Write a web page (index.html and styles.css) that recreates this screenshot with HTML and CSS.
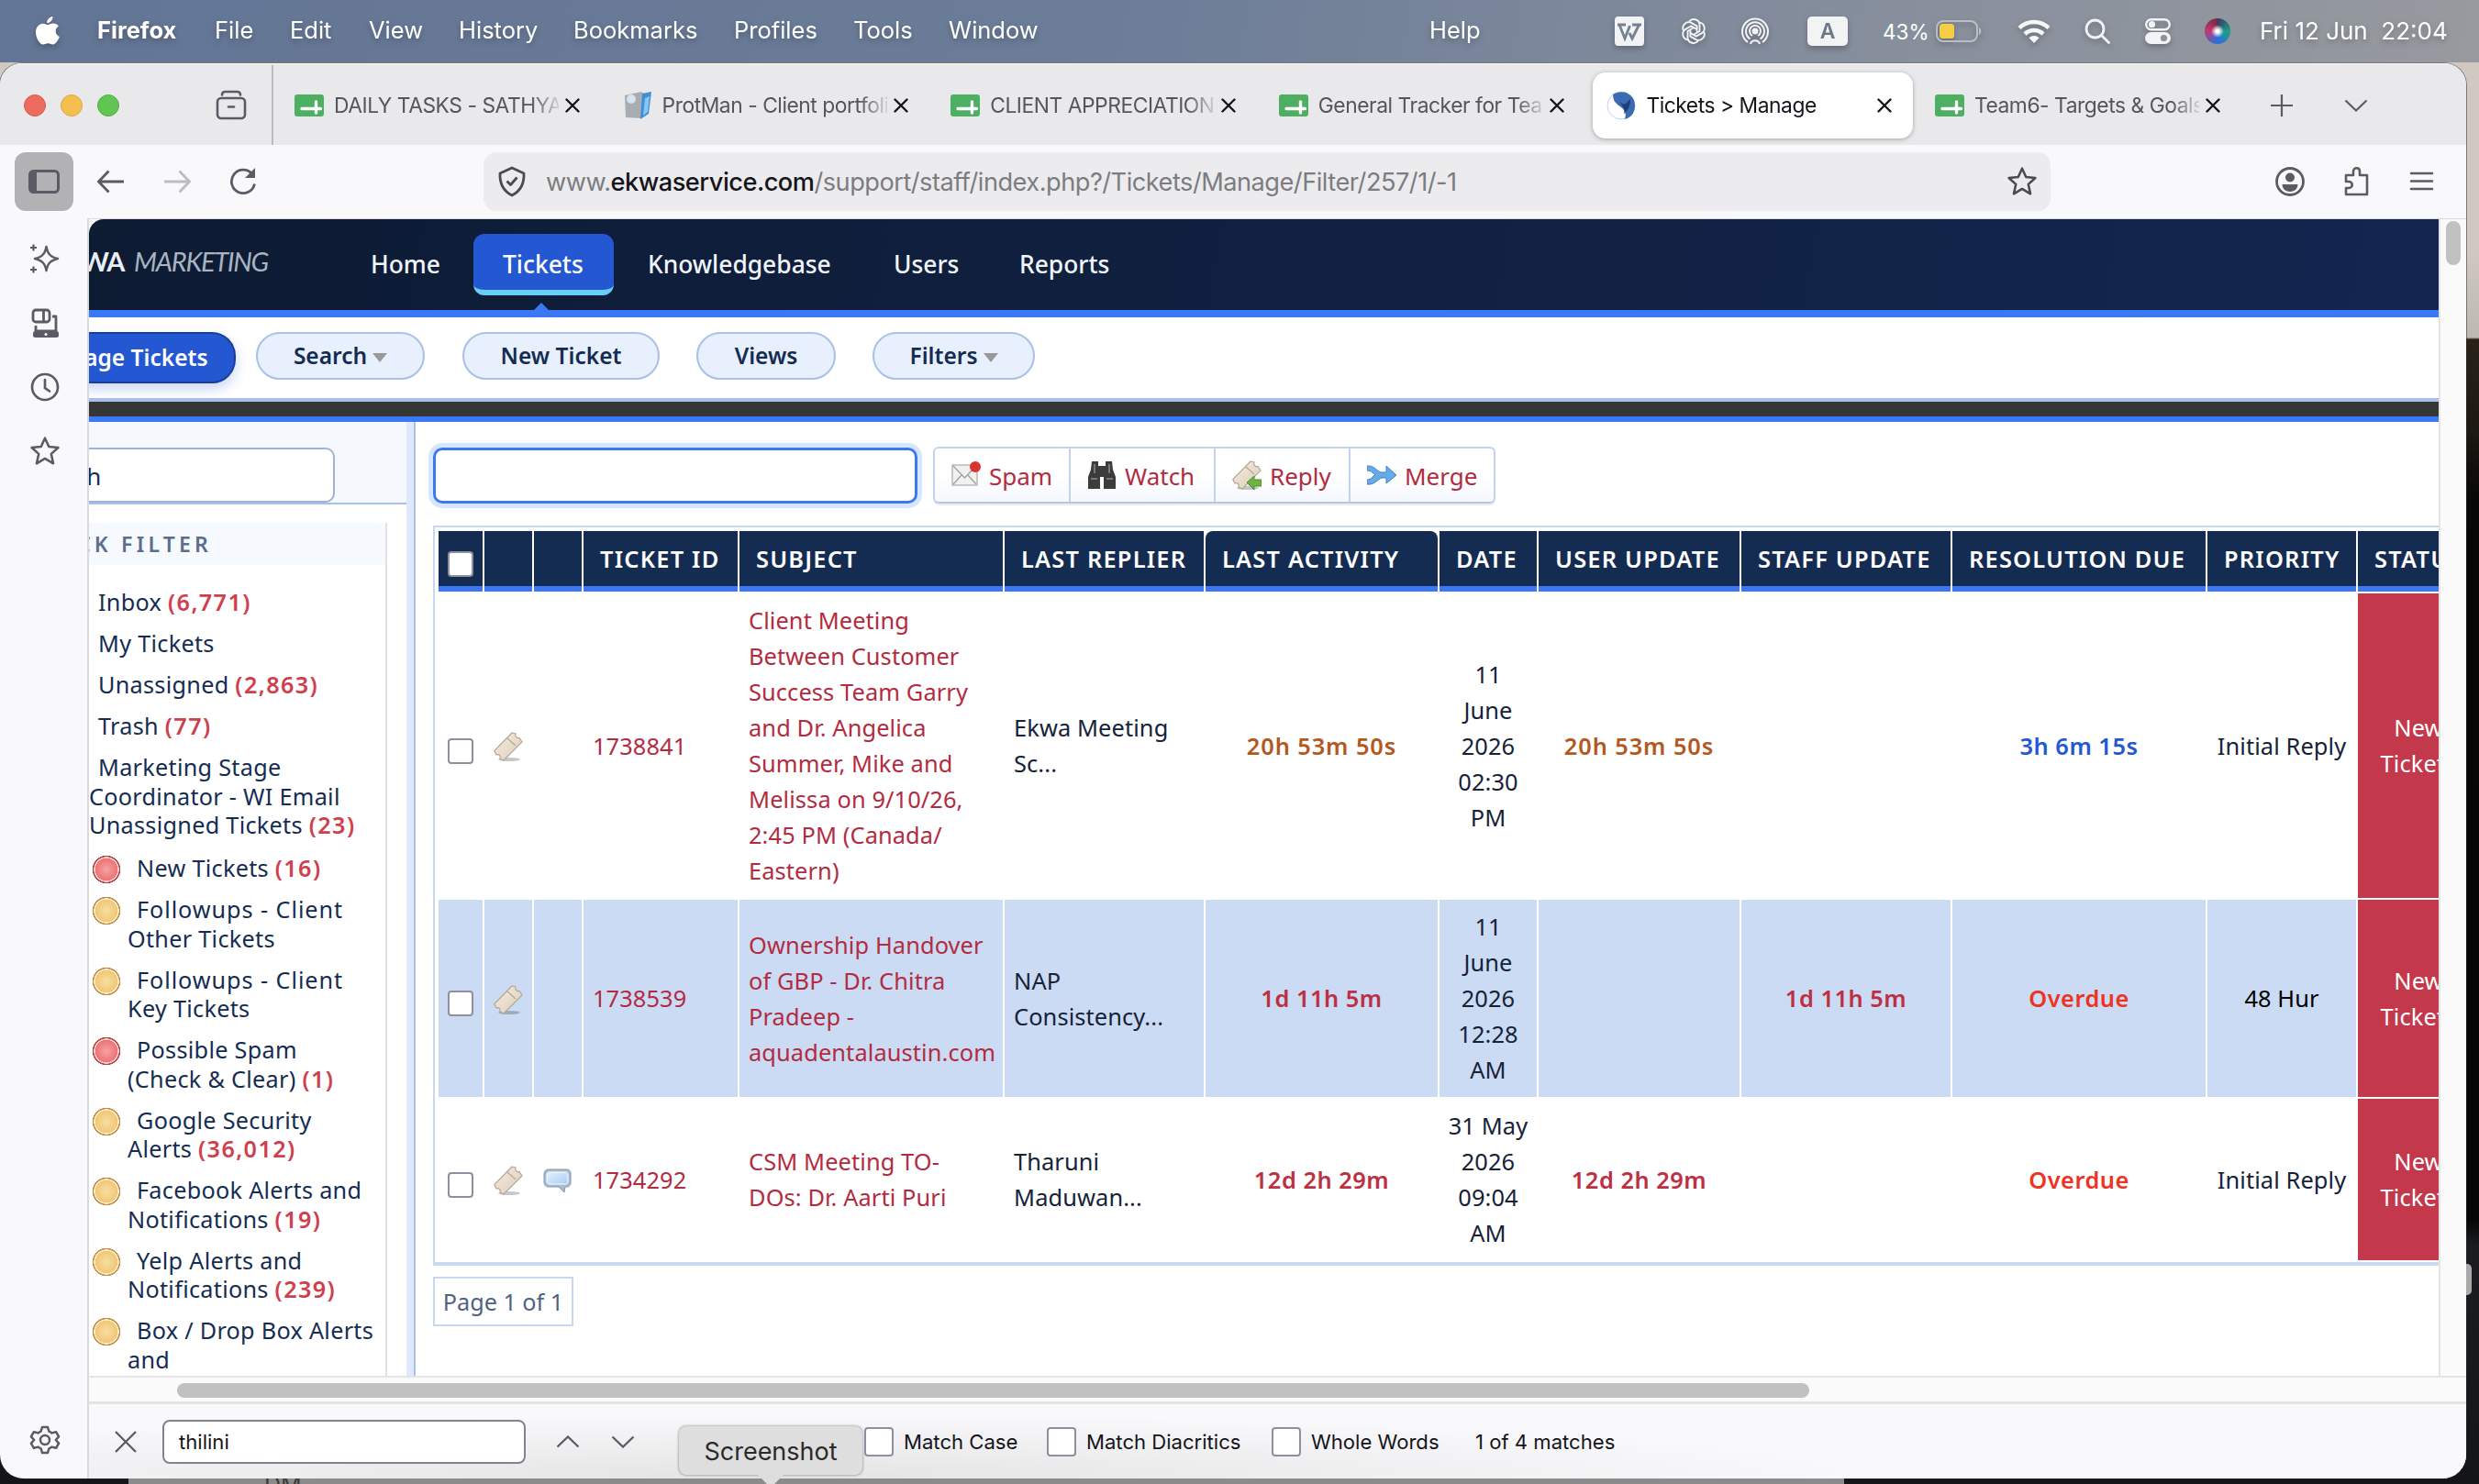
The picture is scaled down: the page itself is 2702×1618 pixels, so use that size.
FILE: index.html
```html
<!DOCTYPE html>
<html lang="en">
<head>
  <meta charset="UTF-8">
  <title>Tickets &gt; Manage</title>
  <link rel="stylesheet" href="styles.css">
</head>
<body>
  <!-- shared icons -->
  <svg class="defs" width="0" height="0">
    <defs>
      <linearGradient id="ticketFill" x1="0" y1="0" x2="1" y2="1">
        <stop offset="0" stop-color="#f6ece0"/><stop offset="1" stop-color="#dccdb9"/>
      </linearGradient>
      <linearGradient id="glass" x1="0" y1="0" x2="1" y2="1">
        <stop offset="0" stop-color="#e4f0fd"/><stop offset="1" stop-color="#a8cdf8"/>
      </linearGradient>
    </defs>
    <symbol id="sheet" viewBox="0 0 32 24">
      <rect width="32" height="24" rx="3" fill="#4caf61"/>
      <path d="M8 15.500h20.500M23.500 8v12" stroke="#fff" stroke-width="3.400" stroke-linecap="round"/>
    </symbol>
    <symbol id="close" viewBox="0 0 16 16">
      <path d="M1.500 1.500l13 13M14.500 1.500l-13 13" stroke="currentColor" stroke-width="2.400" stroke-linecap="round"/>
    </symbol>
    <symbol id="star" viewBox="0 0 32 32">
      <path d="M16 2.500l4 8.800 9.600 1-7.200 6.400 2.100 9.800-8.500-5-8.500 5 2.100-9.800-7.200-6.400 9.600-1z" fill="none" stroke="currentColor" stroke-width="2.400" stroke-linejoin="round"/>
    </symbol>
    <symbol id="ticket" viewBox="0 0 32 32">
      <ellipse cx="17" cy="30" rx="12" ry="2" fill="#000" opacity=".22"/>
      <path d="M20 1l4 1c-1 3 1 5 4 4.500l3 4.500L11 31l-4-2c1-3-1-5-4-4L.8 20.500z" fill="url(#ticketFill)" stroke="#b3a797" stroke-width="1.200"/>
      <path d="M15 7l9 8" stroke="#b3a797" stroke-width="1.200"/>
    </symbol>
  </svg>

  <header class="menubar">
    <svg class="apple" width="28" height="32" viewBox="0 0 28 32"><path fill="#fff" d="M19.500 0c.3 3.700-2.900 7.200-6.200 7.100C12.900 3.600 16.200.3 19.500 0zM14 9c1.500 0 3.300-1.600 6.200-1.500 2.300.1 4.400 1.200 5.700 3.100-4.800 3-4 9.400.9 11.500-1.300 3.700-4 8.300-6.900 8.400-2.100.1-2.900-1.300-5.500-1.300s-3.500 1.300-5.500 1.300C5 30.500 1 22.700 1 17.200c0-6 3.900-9.500 7.700-9.500C11.200 7.700 12.700 9 14 9z"/></svg>
    <nav class="menus">
      <b>Firefox</b><span>File</span><span>Edit</span><span>View</span><span>History</span><span>Bookmarks</span><span>Profiles</span><span>Tools</span><span>Window</span><span>Help</span>
    </nav>
    <div class="status">
      <svg width="32" height="32" viewBox="0 0 32 32"><rect width="32" height="32" rx="4" fill="#f2f3f5"/><path d="M3 9h9M5.500 10l5.500 14 5.500-14M16 18l3 6 7.500-15M19 9h10" fill="none" stroke="#75818f" stroke-width="2.800"/></svg>
      <svg width="32" height="32" viewBox="0 0 32 32" fill="none" stroke="#f2f3f5" stroke-width="1.900"><g id="knot"><path d="M11 5.500a6.500 6.500 0 0 1 11.500 3v7.500l-6 3.500"/><path d="M22.300 6.400a6.500 6.500 0 0 1 3 11.500l-6.500 3.700-6-3.400"/><path d="M27.300 17a6.500 6.500 0 0 1-8.400 8.400l-6.500-3.700v-7"/></g><use href="#knot" transform="rotate(180 16 16)"/></svg>
      <svg width="32" height="32" viewBox="0 0 32 32" fill="none" stroke="#f2f3f5" stroke-width="2"><path d="M8 28a14 14 0 1 1 16 0M10.500 24.500a10 10 0 1 1 11 0M13 21a6 6 0 1 1 6 0"/><circle cx="16" cy="16" r="2.500" fill="#f2f3f5"/><path d="M11 30c1-5 9-5 10 0"/></svg>
      <span class="input-lang">A</span>
      <span class="percent">43%</span>
      <svg width="50" height="24" viewBox="0 0 50 24"><rect x="1" y="1" width="44" height="22" rx="7" fill="none" stroke="#b9bec6" stroke-width="2"/><rect x="4" y="4" width="16" height="16" rx="3.500" fill="#f7cd46"/><path d="M47 8c3 1 3 7 0 8z" fill="#b9bec6"/></svg>
      <svg width="36" height="27" viewBox="0 0 36 27" fill="none" stroke="#f6f7f8" stroke-width="4.500"><path d="M2 9.500a23 23 0 0 1 32 0M8 16a14.500 14.500 0 0 1 20 0"/><path d="M18 26l-5.500-5.800a8 8 0 0 1 11 0z" fill="#f6f7f8" stroke="none"/></svg>
      <svg width="28" height="28" viewBox="0 0 28 28" fill="none" stroke="#f2f3f5" stroke-width="2.800"><circle cx="11.500" cy="11.500" r="9.500"/><path d="M18.500 18.500l8 8" stroke-linecap="round"/></svg>
      <svg width="28" height="28" viewBox="0 0 28 28"><rect x="1.200" y="1.200" width="25.600" height="11" rx="5.500" fill="none" stroke="#f2f3f5" stroke-width="2.400"/><circle cx="7.500" cy="6.700" r="3.600" fill="#f2f3f5"/><rect y="15" width="28" height="13" rx="6.500" fill="#f2f3f5"/><circle cx="20.500" cy="21.500" r="3.600" fill="#8a919c"/></svg>
      <span class="siri"></span>
      <span class="clock">Fri 12 Jun&nbsp; 22:04</span>
    </div>
  </header>

  <div class="desktop">
    <div class="window">
      <div class="tabstrip">
        <i class="light red"></i><i class="light yellow"></i><i class="light green"></i>
        <svg class="overview" width="34" height="34" viewBox="0 0 34 34" fill="none" stroke="#5b5b66" stroke-width="2.600" stroke-linecap="round"><path d="M7 5.500c0-2.500 1-3.500 3.500-3.500h13c2.500 0 3.500 1 3.500 3.500"/><rect x="2" y="9" width="30" height="22" rx="4"/><path d="M14 18.500h6"/></svg>
        <div class="tabs">
          <div class="tab"><svg class="fav sheet"><use href="#sheet"/></svg><span>DAILY TASKS - SATHYA</span><svg class="x"><use href="#close"/></svg></div>
          <div class="tab"><svg class="fav" viewBox="0 0 32 32"><path d="M2 5l18-4 3 2-2 27-18-1z" fill="#a9adb1"/><path d="M21 3l10-2-3 24-9 6z" fill="#3f8fd6"/><path d="M24 8l5-2-2 17-5 4z" fill="#8cc4f2"/><circle cx="9" cy="9" r="5" fill="#d7e4ee"/></svg><span>ProtMan - Client portfolio</span><svg class="x"><use href="#close"/></svg></div>
          <div class="tab"><svg class="fav sheet"><use href="#sheet"/></svg><span>CLIENT APPRECIATION</span><svg class="x"><use href="#close"/></svg></div>
          <div class="tab"><svg class="fav sheet"><use href="#sheet"/></svg><span>General Tracker for Team</span><svg class="x"><use href="#close"/></svg></div>
          <div class="tab active"><svg class="fav" viewBox="0 0 32 32"><circle cx="16" cy="16" r="15" fill="#fff" stroke="#c4d3ea"/><path d="M7 4C18-3 31 4 31 16c0 8-4 13-11 15 2-6 0-10-4-13S7 12 7 4z" fill="#3b6cb3"/><path d="M14 11c3 4 5 4 7 3l5-5c0 7-2 12-7 16 2-6-2-8-5-14z" fill="#1d3f78"/></svg><span>Tickets &gt; Manage</span><svg class="x"><use href="#close"/></svg></div>
          <div class="tab"><svg class="fav sheet"><use href="#sheet"/></svg><span>Team6- Targets &amp; Goals</span><svg class="x"><use href="#close"/></svg></div>
        </div>
        <svg class="plus" width="24" height="24" viewBox="0 0 24 24"><path d="M12 0v24M0 12h24" stroke="#5b5b66" stroke-width="2.200"/></svg>
        <svg class="all-tabs" width="26" height="14" viewBox="0 0 26 14"><path d="M1.500 1.500L13 12.500l11.500-11" fill="none" stroke="#5b5b66" stroke-width="2.200"/></svg>
      </div>

      <div class="toolbar">
        <div class="panel-btn"><svg width="34" height="26" viewBox="0 0 34 26"><rect x="1.500" y="1.500" width="31" height="23" rx="4" fill="none" stroke="#5b5b66" stroke-width="3"/><path d="M3 3h6v20H3z" fill="#5b5b66"/></svg></div>
        <svg class="back" width="32" height="26" viewBox="0 0 32 26" fill="none" stroke="#5b5b66" stroke-width="2.800"><path d="M13.500 1.500L2.500 13l11 11.500M3 13h27"/></svg>
        <svg class="fwd" width="32" height="26" viewBox="0 0 32 26" fill="none" stroke="#bdbdc1" stroke-width="2.800"><path d="M18.500 1.500L29.500 13l-11 11.500M29 13H2"/></svg>
        <svg class="reload" width="32" height="32" viewBox="0 0 32 32" fill="none" stroke="#5b5b66" stroke-width="2.800"><path d="M28.500 18.500A12.700 12.700 0 1 1 26 8"/><path d="M29 1v11H18z" fill="#5b5b66" stroke="none"/></svg>
        <div class="urlbar">
          <svg class="shield" width="32" height="34" viewBox="0 0 32 34" fill="none" stroke="#4a4a52" stroke-width="2.800" stroke-linejoin="round"><path d="M16 2l13 6c.5 11-3 19-13 24C6 27 2.500 19 3 8z"/><path d="M10.500 16.500l4 4 7-8"/></svg>
          <span class="url">www.<b>ekwaservice.com</b>/support/staff/index.php?/Tickets/Manage/Filter/257/1/-1</span>
          <svg class="bookmark" width="34" height="34"><use href="#star"/></svg>
        </div>
        <div class="tools">
          <svg width="34" height="34" viewBox="0 0 34 34"><circle cx="17" cy="17" r="14.500" fill="none" stroke="#5b5b66" stroke-width="2.800"/><circle cx="17" cy="12.500" r="5" fill="#5b5b66"/><path d="M8.500 20h17c0 5-4 8-8.500 8s-8.500-3-8.500-8z" fill="#5b5b66"/></svg>
          <svg width="34" height="34" viewBox="0 0 34 34" fill="none" stroke="#5b5b66" stroke-width="2.600" stroke-linejoin="round"><path d="M6 10h8V6c0-5 7-5 7 0v4h8v21H6v-7h3c5 0 5-7 0-7H6z"/></svg>
          <svg width="34" height="34" viewBox="0 0 34 34" stroke="#5b5b66" stroke-width="2.600" stroke-linecap="round"><path d="M5 8h23M5 16.500h23M5 25h23"/></svg>
        </div>
      </div>

      <div class="main">
        <aside class="rail">
          <svg viewBox="0 0 34 34" fill="none" stroke="#5b5b66" stroke-width="2.500" stroke-linejoin="round"><path d="M18.500 4c1.500 8 4.500 11 12.500 13-8 2-11 5-12.500 13C17 22 14 19 6 17c8-2 11-5 12.500-13z"/><path d="M4.500 1.500v7M1 5h7M4.500 25.500v7M1 29h7" stroke-width="2.200"/></svg>
          <svg viewBox="0 0 34 34" fill="none" stroke="#5b5b66" stroke-width="2.800" stroke-linejoin="round"><rect x="4" y="3" width="18" height="13" rx="3"/><path d="M15.500 3v13M7 20v6h22V10h-4"/><rect x="4" y="26" width="28" height="7" rx="2.500" fill="#5b5b66" stroke="none"/><circle cx="18" cy="29.500" r="1.500" fill="#fff" stroke="none"/></svg>
          <svg viewBox="0 0 34 34" fill="none" stroke="#5b5b66" stroke-width="2.700" stroke-linecap="round"><circle cx="17" cy="17" r="14"/><path d="M17 9v9l5 3.500"/></svg>
          <svg class="rail-star"><use href="#star"/></svg>
          <svg class="gear" viewBox="0 0 34 34" fill="none" stroke="#5b5b66" stroke-width="2.500" stroke-linejoin="round"><path d="M14 3h6l1.300 4.500 3.200 1.900 4.600-1.200 3 5.200-3.300 3.600 3.300 3.600-3 5.200-4.600-1.200-3.200 1.900L20 31h-6l-1.300-4.500-3.200-1.900-4.600 1.200-3-5.200L5.200 17l-3.300-3.600 3-5.200 4.600 1.200 3.200-1.900z"/><circle cx="17" cy="17" r="5"/></svg>
        </aside>

        <div class="right">
          <div class="scroller">
            <div class="page">
              <div class="site-head">
                <div class="logo"><b>EKWA</b> <i>MARKETING</i></div>
                <nav class="site-nav">
                  <a>Home</a><a class="on">Tickets</a><a>Knowledgebase</a><a>Users</a><a>Reports</a>
                </nav>
              </div>
              <div class="subnav">
                <a class="pill on">Manage Tickets</a>
                <a class="pill search">Search <i></i></a>
                <a class="pill new">New Ticket</a>
                <a class="pill views">Views</a>
                <a class="pill filters">Filters <i></i></a>
              </div>
              <div class="dark-bar"></div>

              <div class="columns">
                <div class="left-col">
                  <div class="search-wrap"><div class="search-box">Search</div></div>
                  <div class="quick">
                    <h4><span>QUICK FILTER</span></h4>
                    <ul>
                      <li>Inbox <b>(6,771)</b></li>
                      <li>My Tickets</li>
                      <li>Unassigned <b>(2,863)</b></li>
                      <li>Trash <b>(77)</b></li>
                      <li>Marketing Stage<br>Coordinator - WI Email<br>Unassigned Tickets <b>(23)</b></li>
                      <li class="dot red first">New Tickets <b>(16)</b></li>
                      <li class="dot"><span class="wide">Followups - Client</span><br>Other Tickets</li>
                      <li class="dot"><span class="wide">Followups - Client</span><br>Key Tickets</li>
                      <li class="dot red">Possible Spam<br>(Check &amp; Clear) <b>(1)</b></li>
                      <li class="dot">Google Security<br>Alerts <b>(36,012)</b></li>
                      <li class="dot">Facebook Alerts and<br>Notifications <b>(19)</b></li>
                      <li class="dot">Yelp Alerts and<br>Notifications <b>(239)</b></li>
                      <li class="dot">Box / Drop Box Alerts<br>and</li>
                    </ul>
                  </div>
                </div>

                <div class="content">
                  <div class="actions">
                    <div class="query"></div>
                    <div class="btns">
                      <a><svg viewBox="0 0 32 32"><rect x="1" y="5" width="27" height="22" fill="#f1f1f1" stroke="#b9b9b9" stroke-width="1.500"/><path d="M2 6l12.500 13L27 6M2 26l9-10M27 26l-9-10" fill="none" stroke="#a5a5a5" stroke-width="1.500"/><circle cx="26" cy="7" r="6" fill="#d8362c"/></svg>Spam</a>
                      <a><svg viewBox="0 0 32 32"><path d="M5 1h7v5h8V1h7l1 9 3 8v13H18V18h-4v13H1V18l3-8z" fill="#3c3c3c"/><path d="M4 20h7M21 20h7M8 4v10M24 4v10" stroke="#777" stroke-width="2"/></svg>Watch</a>
                      <a><svg viewBox="0 0 32 32"><use href="#ticket"/><path d="M16 24l8-7v4h8v7h-8v4z" fill="#6fb244" stroke="#4e8f2a"/></svg>Reply</a>
                      <a><svg viewBox="0 0 32 32"><path d="M0 6c7-1 10 5 15 7h6V6l11 10-11 9v-6h-5c-5 2-8 8-16 7v-5c5 0 6-4 9-5.500C6 14 5 11 0 11z" fill="#66aae8" stroke="#3f82c7"/></svg>Merge</a>
                    </div>
                  </div>

                  <div class="grid">
                    <table>
                      <colgroup><col class="c1"><col class="c2"><col class="c2"><col class="c4"><col class="c5"><col class="c6"><col class="c7"><col class="c8"><col class="c9"><col class="c10"><col class="c11"><col class="c12"><col class="c13"></colgroup>
                      <thead>
                        <tr><th class="check"><i class="box"></i></th><th></th><th></th><th>TICKET ID</th><th>SUBJECT</th><th>LAST REPLIER</th><th class="sorted">LAST ACTIVITY</th><th>DATE</th><th>USER UPDATE</th><th>STAFF UPDATE</th><th>RESOLUTION DUE</th><th>PRIORITY</th><th>STATUS</th></tr>
                      </thead>
                      <tbody>
                        <tr class="r1">
                          <td class="check"><i class="box"></i></td>
                          <td class="ico"><svg><use href="#ticket"/></svg></td>
                          <td></td>
                          <td class="link">1738841</td>
                          <td class="link">Client Meeting<br>Between Customer<br>Success Team Garry<br>and Dr. Angelica<br>Summer, Mike and<br>Melissa on 9/10/26,<br>2:45 PM (Canada/<br>Eastern)</td>
                          <td>Ekwa Meeting<br>Sc...</td>
                          <td class="mid warn">20h 53m 50s</td>
                          <td class="mid">11<br>June<br>2026<br>02:30<br>PM</td>
                          <td class="mid warn">20h 53m 50s</td>
                          <td></td>
                          <td class="mid ok">3h 6m 15s</td>
                          <td class="mid">Initial Reply</td>
                          <td class="mid new-ticket">New<br>Tickets</td>
                        </tr>
                        <tr class="r2">
                          <td class="check"><i class="box"></i></td>
                          <td class="ico"><svg><use href="#ticket"/></svg></td>
                          <td></td>
                          <td class="link">1738539</td>
                          <td class="link">Ownership Handover<br>of GBP - Dr. Chitra<br>Pradeep -<br>aquadentalaustin.com</td>
                          <td>NAP<br>Consistency...</td>
                          <td class="mid late">1d 11h 5m</td>
                          <td class="mid">11<br>June<br>2026<br>12:28<br>AM</td>
                          <td></td>
                          <td class="mid late">1d 11h 5m</td>
                          <td class="mid overdue">Overdue</td>
                          <td class="mid black">48 Hur</td>
                          <td class="mid new-ticket">New<br>Tickets</td>
                        </tr>
                        <tr class="r3">
                          <td class="check"><i class="box"></i></td>
                          <td class="ico"><svg><use href="#ticket"/></svg></td>
                          <td class="ico"><svg viewBox="0 0 32 32"><path d="M6 4h19c4 0 5 2 5 5v9c0 3-1 5-5 5h-1l-1 6-6-6H6c-3 0-5-2-5-5V9c0-3 2-5 5-5z" fill="#a9bccd" stroke="#7f99b1"/><path d="M7 7h17c2 0 3 1 3 3v7c0 2-1 3-3 3H7c-2 0-3-1-3-3v-7c0-2 1-3 3-3z" fill="url(#glass)" stroke="#fff"/></svg></td>
                          <td class="link">1734292</td>
                          <td class="link">CSM Meeting TO-<br>DOs: Dr. Aarti Puri</td>
                          <td>Tharuni<br>Maduwan...</td>
                          <td class="mid late">12d 2h 29m</td>
                          <td class="mid">31 May<br>2026<br>09:04<br>AM</td>
                          <td class="mid late">12d 2h 29m</td>
                          <td></td>
                          <td class="mid overdue">Overdue</td>
                          <td class="mid">Initial Reply</td>
                          <td class="mid new-ticket">New<br>Tickets</td>
                        </tr>
                      </tbody>
                    </table>
                  </div>
                  <div class="pager">Page 1 of 1</div>
                </div>
              </div>
            </div>
            <div class="vbar"><i></i></div>
          </div>
          <div class="hbar"><i></i></div>

          <div class="findbar">
            <svg class="find-x" width="24" height="24" viewBox="0 0 24 24"><path d="M1 1l22 22M23 1L1 23" stroke="#5b5b66" stroke-width="2.300"/></svg>
            <div class="find-input">thilini</div>
            <svg class="up" width="26" height="14" viewBox="0 0 26 14"><path d="M1.500 12.500L13 1.500l11.500 11" fill="none" stroke="#5b5b66" stroke-width="2.300"/></svg>
            <svg class="down" width="26" height="14" viewBox="0 0 26 14"><path d="M1.500 1.500L13 12.500l11.500-11" fill="none" stroke="#5b5b66" stroke-width="2.300"/></svg>
            <label class="f1"><i></i>Match Case</label>
            <label class="f2"><i></i>Match Diacritics</label>
            <label class="f3"><i></i>Whole Words</label>
            <span class="matches">1 of 4 matches</span>
          </div>
        </div>
      </div>
    </div>
    <div class="behind"><span>DM</span></div>
    <i class="handle"></i>
    <div class="dock-tip">Screenshot</div>
  </div>
</body>
</html>
```
FILE: styles.css
```css
* {
  box-sizing: border-box;
}
body {
  margin: 0;
  width: 2702px;
  height: 1618px;
  overflow: hidden;
  background: #0b0b0b;
  font-family: Inter, "Liberation Sans", sans-serif;
  font-size: 25px;
}
svg {
  display: block;
  flex: none;
}
.defs {
  position: absolute;
}

/* mac menu bar */
.menubar {
  height: 68px;
  display: flex;
  align-items: center;
  padding-left: 38px;
  background: linear-gradient(100deg, #637595, #6c7d98 45%, #8a919d 80%, #979a9f);
  color: #fff;
}
.menubar svg, .menus, .clock, .input-lang {
  filter: drop-shadow(0 3px 3px rgba(0, 0, 0, .25));
}
.apple {
  margin-right: 40px;
}
.menus {
  display: grid;
  grid-template-columns: 128px 82px 86px 98px 125px 175px 130px 104px 524px 202px;
  font-size: 25.5px;
  padding-bottom: 3px;
}
.status {
  display: grid;
  grid-template-columns: 70px 67px 73px 82px 58px 89px 73px 66px 65px 60px 210px;
  align-items: center;
  height: 66px;
  white-space: nowrap;
}
.input-lang {
  width: 44px;
  height: 32px;
  border-radius: 5px;
  background: #f2f3f5;
  color: #6e7886;
  font-size: 23px;
  font-weight: 600;
  line-height: 32px;
  text-align: center;
}
.percent {
  font-size: 22.5px;
}
.siri {
  width: 28px;
  height: 28px;
  border-radius: 50%;
  background: radial-gradient(circle at 50% 50%, #fff 0 8%, transparent 35%), conic-gradient(#3a3a66, #1e9c86 25%, #2a6fe0 50%, #c23a72 75%, #7a2742);
}
.clock {
  font-size: 26px;
  padding-bottom: 2px;
}

/* window */
.desktop {
  position: relative;
  height: 1550px;
  padding-top: 1px;
  background: linear-gradient(#d0c9c2 0 200px, #bdb8b2 300px, #29231a 302px, #1c1812 400px, #070707 480px, #050505 1260px, #1b1c20 1290px, #141517);
}
.window {
  width: 2688px;
  height: 1543px;
  border-radius: 24px 24px 26px 26px;
  overflow: hidden;
  background: #f9f9fb;
  box-shadow: 0 0 0 1px rgba(40, 40, 45, .5);
}
.tabstrip {
  height: 89px;
  display: flex;
  align-items: center;
  padding: 1px 0 0 26px;
  background: #e9e9eb;
  border-top: 1px solid #f7f7f8;
}
.light {
  width: 24px;
  height: 24px;
  margin-right: 16px;
  border-radius: 50%;
}
.light.red { background: #ed6a5e; border: 1px solid #d85b50; }
.light.yellow { background: #f5bf4f; border: 1px solid #dfa83e; }
.light.green { background: #61c554; border: 1px solid #51ad44; }
.overview {
  margin: 0 0 0 89px;
}
.tabs {
  display: flex;
  align-self: stretch;
  align-items: center;
  gap: 8.6px;
  margin-left: 27px;
  padding-left: 8px;
  border-left: 2px solid #bcbcbf;
}
.tab {
  display: flex;
  align-items: center;
  width: 349px;
  height: 72px;
  padding-left: 15px;
  border-radius: 14px;
  color: #55555b;
  font-size: 22.8px;
  letter-spacing: -.45px;
}
.tab.active {
  background: #fff;
  color: #15141a;
  box-shadow: 0 1px 5px rgba(0, 0, 0, .3);
}
.tab span {
  width: 245px;
  margin: 0 7px 0 11px;
  overflow: hidden;
  white-space: nowrap;
  -webkit-mask-image: linear-gradient(to right, #000 215px, transparent 250px);
  mask-image: linear-gradient(to right, #000 215px, transparent 250px);
}
.fav {
  width: 32px;
  height: 32px;
}
.fav.sheet {
  height: 24px;
}
.x {
  width: 16px;
  height: 16px;
  color: #15141a;
}
.plus {
  margin-left: 32px;
}
.all-tabs {
  margin-left: 56px;
}

.toolbar {
  height: 80px;
  display: flex;
  align-items: center;
  padding: 0 0 0 16px;
  background: #f9f9fb;
}
.panel-btn {
  width: 64px;
  height: 64px;
  border-radius: 12px;
  background: #b2b2b4;
  display: grid;
  place-items: center;
}
.back { margin-left: 25px; }
.fwd { margin-left: 40px; }
.reload { margin-left: 40px; }
.urlbar {
  display: flex;
  align-items: center;
  width: 1708px;
  height: 64px;
  margin-left: 246px;
  padding: 0 14px 0 15px;
  border-radius: 14px;
  background: #ececee;
}
.url {
  margin-left: 21px;
  color: #7c7c81;
  font-size: 27.2px;
  letter-spacing: -.5px;
  white-space: nowrap;
}
.url b {
  color: #15141a;
  font-weight: 500;
}
.bookmark {
  margin-left: auto;
  color: #4a4a52;
}
.tools {
  display: flex;
  gap: 38px;
  margin-left: 244px;
}

/* sidebar rail */
.main {
  display: flex;
  height: 1374px;
}
.rail {
  width: 97px;
  padding: 27px 0 25px 32px;
  border-right: 2px solid #dadadd;
  display: flex;
  flex-direction: column;
}
.rail svg {
  width: 34px;
  height: 34px;
  margin-bottom: 36px;
  color: #5b5b66;
}
.rail svg.gear {
  margin: auto 0 0;
}

/* page */
.right {
  width: 2591px;
}
.scroller {
  display: flex;
  height: 1262px;
  border-top: 1px solid #dadadd;
  background: #fafafa;
}
.page {
  width: 2561px;
  height: 1261px;
  overflow: hidden;
  border-top-left-radius: 16px;
  background: #fff;
  font-family: "Noto Sans", sans-serif;
  color: #152c52;
}
.vbar {
  width: 30px;
  padding: 2px 0 0 6px;
  border-left: 2px solid #e5e5e5;
}
.vbar i {
  display: block;
  width: 16px;
  height: 48px;
  border-radius: 8px;
  background: #c1c1c1;
}
.hbar {
  height: 31px;
  padding: 6px 0 0 96px;
  border-top: 2px solid #e5e5e5;
  border-bottom: 3px solid #e3e3e5;
  background: #fafafa;
}
.hbar i {
  display: block;
  width: 1779px;
  height: 16px;
  border-radius: 8px;
  background: #c1c1c1;
}

.site-head {
  display: flex;
  height: 107px;
  border-bottom: 8px solid #3b78f5;
  background: linear-gradient(100deg, #0d1b33, #12244a 85%, #142650);
}
.logo {
  display: flex;
  justify-content: flex-end;
  gap: 11px;
  width: 197px;
  height: 93px;
  line-height: 92px;
  overflow: hidden;
  font-family: Lato, sans-serif;
  font-size: 29px;
  color: #e9edf4;
  letter-spacing: -1.3px;
}
.logo i {
  padding-right: 2px;
  color: #aab3c2;
}
.site-nav {
  display: flex;
  padding: 16px 0 0 73px;
}
.site-nav a {
  width: 149px;
  height: 67px;
  padding-left: 37px;
  line-height: 67px;
  color: #f1f5fb;
  font-size: 26.4px;
  font-weight: 500;
}
.site-nav a:nth-child(3) { width: 268px; }
.site-nav a:nth-child(4) { width: 137px; }
.site-nav a.on {
  position: relative;
  width: 153px;
  padding-left: 32px;
  border-bottom: 6px solid #67d0f8;
  border-radius: 12px;
  background: #2457d2;
  color: #fff;
}
/* pointer on the blue line */
.site-nav a.on::after {
  content: "";
  position: absolute;
  left: 66px;
  bottom: -22px;
  border: 8px solid transparent;
  border-top: 0;
  border-bottom-color: #3b78f5;
}
.subnav {
  display: flex;
  height: 92px;
  padding-top: 16px;
  border-bottom: 4px solid #a9c1e8;
}
.pill {
  display: flex;
  align-items: center;
  justify-content: center;
  height: 52px;
  padding-bottom: 2px;
  flex: none;
  border: 2px solid #a9c1e8;
  border-radius: 26px;
  background: #e8f0fe;
  font-size: 24.5px;
  font-weight: 600;
  white-space: nowrap;
}
.pill.on {
  width: 240px;
  height: 56px;
  margin-left: -80px;
  padding-right: 8px;
  border-color: #1a3f96;
  background: #2457d2;
  color: #fff;
  box-shadow: 0 6px 14px rgba(36, 87, 210, .25);
}
.pill.search { width: 184px; margin-left: 22px; }
.pill.new { width: 215px; margin-left: 41px; }
.pill.views { width: 152px; margin-left: 40px; }
.pill.filters { width: 177px; margin-left: 40px; }
.pill i {
  margin: 6px 0 0 6px;
  border: 8px solid transparent;
  border-top: 10px solid #999;
  border-bottom: 0;
}
.dark-bar {
  height: 22px;
  border-bottom: 6px solid #3b78f5;
  background: #363636;
}

.columns {
  display: flex;
  height: 1040px;
}
.left-col {
  width: 356px;
  flex: none;
  border-right: 2px solid #a9c1e8;
  box-shadow: inset -8px 0 #dfe9fb;
}
.search-wrap {
  width: 346px;
  height: 90px;
  padding-top: 28px;
  border-bottom: 2px solid #a9c1e8;
  background: #f5f8fd;
}
.search-box {
  width: 380px;
  height: 60px;
  margin-left: -112px;
  padding-left: 41px;
  border: 2px solid #9db3d8;
  border-radius: 10px;
  background: #fff;
  line-height: 58px;
  font-size: 26px;
}
.quick {
  width: 325px;
  height: 930px;
  margin-top: 20px;
  border-right: 2px solid #e2e2e4;
  overflow: hidden;
}
.quick h4 {
  display: flex;
  justify-content: flex-end;
  margin: 0;
  height: 46px;
  padding-right: 189px;
  line-height: 46px;
  background: #f6f9fe;
  color: #5b6e8c;
  font-size: 23px;
  font-weight: 600;
  letter-spacing: 4.2px;
  white-space: nowrap;
}
.quick ul {
  list-style: none;
  margin: 18px 0 0;
  padding: 0;
  font-size: 25.2px;
  line-height: 31.5px;
  letter-spacing: .3px;
}
.quick li {
  padding: 7px 0 6.5px;
  text-indent: 10px;
  white-space: nowrap;
}
.quick b {
  color: #cf3f4e;
  font-weight: 600;
  letter-spacing: 1.4px;
}
.quick .wide {
  letter-spacing: .95px;
}
.quick li.first {
  margin-top: 2px;
}
.quick li.dot {
  padding-left: 42px;
  background: radial-gradient(circle at 19px 24px, #f7dfa0 0, #f0c777 12px, #fbecc4 12.5px, #fbecc4 13.5px, #c68a48 14px, #c68a48 15px, transparent 15.5px);
}
.quick li.dot.red {
  background: radial-gradient(circle at 19px 24px, #f4a3a3 0, #ed7474 12px, #f9d0d0 12.5px, #f9d0d0 13.5px, #b94040 14px, #b94040 15px, transparent 15.5px);
}

.content {
  padding: 27px 0 0 19px;
}
.actions {
  display: flex;
  height: 62px;
}
.query {
  width: 528px;
  height: 61px;
  margin-top: 1px;
  border: 3px solid #3b78f5;
  border-radius: 10px;
  box-shadow: 0 0 0 5px #d8e6fd;
}
.btns {
  display: flex;
  margin-left: 17px;
  border: 2px solid #c2d4ed;
  border-bottom-color: #b5c7e2;
  border-radius: 6px;
  background: linear-gradient(#fff 50%, #f5f8fe);
  box-shadow: 0 2px 1px #ececee;
}
.btns a {
  display: flex;
  align-items: center;
  gap: 9px;
  width: 148px;
  padding: 2px 0 0 18px;
  border-right: 2px solid #c2d4ed;
  color: #b32b41;
  font-size: 26px;
}
.btns a:nth-child(2) { width: 158px; }
.btns a:nth-child(3) { width: 147px; }
.btns a:last-child { width: 156px; border: 0; }
.btns svg {
  width: 32px;
  height: 32px;
  margin-top: -2px;
}

.grid {
  width: 2236px;
  margin-top: 24px;
  padding: 2px 2px 0;
  border: 2px solid #c7d7ee;
  border-bottom: 4px solid #cbdaf0;
}
table {
  width: 2228px;
  table-layout: fixed;
  border-spacing: 2px;
  line-height: 39px;
  font-size: 25.4px;
  letter-spacing: .1px;
  color: #152238;
}
.c1 { width: 48px; }
.c2 { width: 52px; }
.c4 { width: 168px; }
.c5 { width: 287px; }
.c6 { width: 217px; }
.c7 { width: 253px; }
.c8 { width: 106px; }
.c9 { width: 219px; }
.c10 { width: 228px; }
.c11 { width: 276px; }
.c12 { width: 162px; }
.c13 { width: 132px; }
th {
  height: 66px;
  padding: 0 0 0 18px;
  border-bottom: 6px solid #3b78f5;
  background: #152c52;
  color: #fff;
  font-size: 25.4px;
  font-weight: 600;
  letter-spacing: 1.2px;
  line-height: 60px;
  text-align: left;
  white-space: nowrap;
}
th.sorted {
  border-radius: 8px 8px 0 0;
}
td {
  padding: 0 0 0 10px;
  white-space: nowrap;
}
.r1 td { height: 332px; }
.r2 td { height: 215px; background: #cadbf3; }
.r3 td { height: 176px; }
.link { color: #b32b41; }
td.mid {
  padding: 0;
  text-align: center;
}
.warn, .ok, .late, .overdue {
  font-weight: 600;
  letter-spacing: .5px;
}
.warn { color: #b3591f; letter-spacing: .9px; }
.ok { color: #2457d2; }
.late { color: #bd2f43; }
.overdue { color: #ed3424; }
.black { color: #000; }
tr td.new-ticket {
  background: #c4384b;
  color: #fff;
}
.check {
  padding: 11px 0 0 10px;
}
.box {
  display: block;
  width: 28px;
  height: 28px;
  border: 2px solid #8f8f9d;
  border-radius: 4px;
  background: #fff;
}
td.ico {
  padding-top: 2px;
}
td.ico svg {
  width: 32px;
  height: 32px;
}
.pager {
  width: 153px;
  height: 54px;
  margin-top: 12px;
  border: 2px solid #c7d7ee;
  color: #4f6381;
  font-size: 25.2px;
  line-height: 50px;
  text-align: center;
}

/* find bar */
.findbar {
  display: flex;
  align-items: center;
  height: 81px;
  padding: 1px 0 0 28px;
  background: radial-gradient(ellipse 1200px 70px at 745px 100%, #e4e4e5, #f9f9fb);
  color: #15141a;
  font-size: 22.1px;
}
.find-input {
  width: 396px;
  height: 48px;
  margin: 0 33px 0 28px;
  padding-left: 16px;
  border: 2px solid #83838f;
  border-radius: 8px;
  background: #fff;
  line-height: 44px;
}
.down {
  margin-left: 34px;
}
.findbar label {
  display: flex;
  align-items: center;
  gap: 11px;
  width: 199px;
}
.findbar label i {
  width: 32px;
  height: 32px;
  border: 2px solid #8f8f9d;
  border-radius: 4px;
  background: #fff;
}
.findbar .f1 { margin-left: 250px; }
.findbar .f2 { width: 245px; }
.findbar .f3 { width: 222px; }

/* whatever peeks out from behind the window */
.behind {
  width: 1870px;
  height: 6px;
  margin-left: 140px;
  padding-left: 148px;
  overflow: hidden;
  background: #8b8b8b;
  color: #3c3c3c;
  line-height: 14px;
}
.handle {
  position: absolute;
  left: 2688px;
  top: 1310px;
  width: 6px;
  height: 34px;
  border-radius: 0 5px 5px 0;
  background: #a9a9a9;
}
.dock-tip {
  position: absolute;
  left: 740px;
  top: 1487px;
  width: 200px;
  height: 53px;
  border-radius: 8px;
  background: #dededf;
  box-shadow: 0 0 3px rgba(0, 0, 0, .5);
  color: #2a2a2a;
  font-size: 27px;
  line-height: 56px;
  text-align: center;
}
.dock-tip::after {
  content: "";
  position: absolute;
  left: 86px;
  top: 53px;
  border: 14px solid transparent;
  border-top-color: #dededf;
  border-bottom: 0;
}
```
